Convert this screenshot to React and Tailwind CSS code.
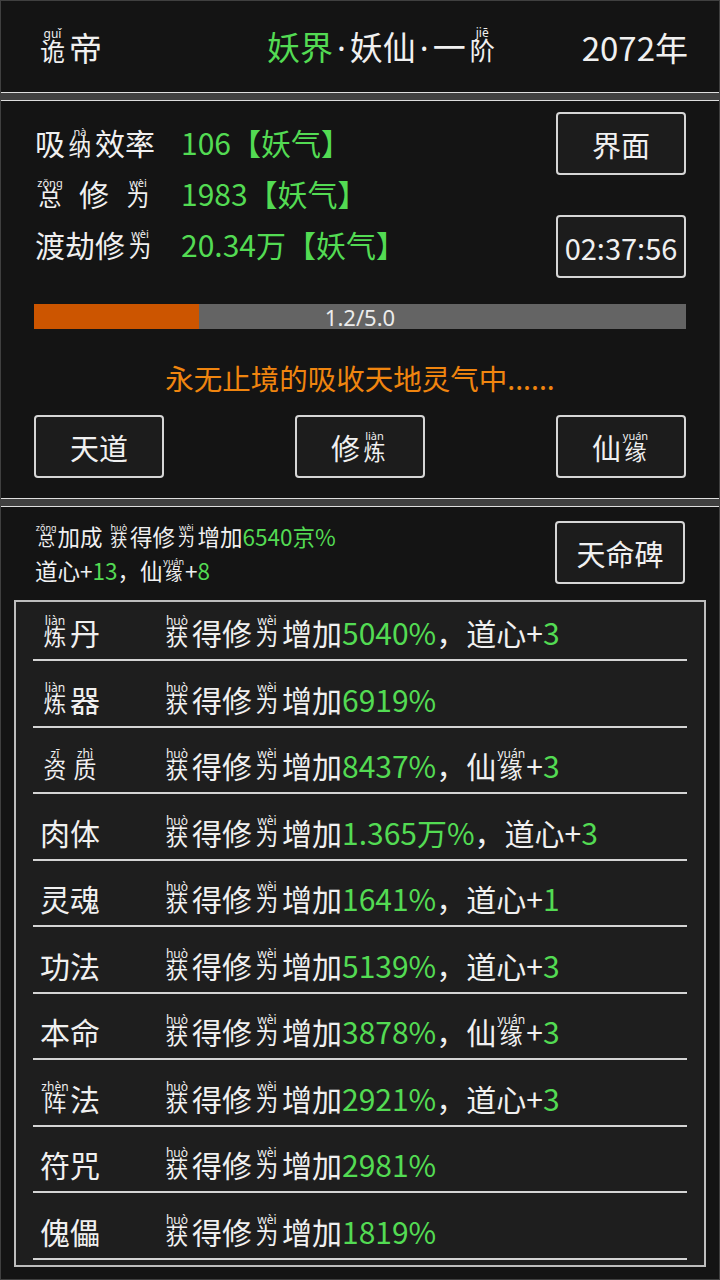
import React from "react";

const G = "text-[#53db53]";

function R({ c, p, pc = "text-[11px]" }) {
  return (
    <span className="inline-block w-[1em] text-center">
      <span className="relative inline-block text-[0.76em] leading-none">
        {c}
        <span
          className={`absolute bottom-full left-1/2 -translate-x-1/2 translate-y-[2px] ${pc} leading-none whitespace-nowrap font-['Noto_Sans',sans-serif]`}
        >
          {p}
        </span>
      </span>
    </span>
  );
}

function Btn({ children }) {
  return (
    <div className="w-[130px] h-[63px] shrink-0 bg-[#1c1c1c] border-2 border-[#d6d6d6] rounded-[4px] flex items-center justify-center text-[29px] leading-[36px]">
      <span>{children}</span>
    </div>
  );
}

const Dot = () => (
  <span className="px-[4px] font-['Noto_Sans',sans-serif]">·</span>
);

const Gain = () => (
  <>
    <R c="获" p="huò" pc="text-[12px]" />得修<R c="为" p="wèi" pc="text-[12px]" />增加
  </>
);

const rows = [
  { label: <><R c="炼" p="liàn" pc="text-[12px]" />丹</>, v: "5040%", extra: "dx", n: "3" },
  { label: <><R c="炼" p="liàn" pc="text-[12px]" />器</>, v: "6919%" },
  { label: <><R c="资" p="zī" pc="text-[12px]" /><R c="质" p="zhì" pc="text-[12px]" /></>, v: "8437%", extra: "xy", n: "3" },
  { label: "肉体", v: "1.365万%", extra: "dx", n: "3" },
  { label: "灵魂", v: "1641%", extra: "dx", n: "1" },
  { label: "功法", v: "5139%", extra: "dx", n: "3" },
  { label: "本命", v: "3878%", extra: "xy", n: "3" },
  { label: <><R c="阵" p="zhèn" pc="text-[12px]" />法</>, v: "2921%", extra: "dx", n: "3" },
  { label: "符咒", v: "2981%" },
  { label: "傀儡", v: "1819%" },
];

export default function App() {
  return (
    <div className="w-[720px] h-[1280px] bg-[#404040] p-px flex flex-col gap-[7px] text-[#f0f0f0] overflow-hidden font-['Noto_Sans_CJK_SC','Noto_Sans',sans-serif]">
      {/* Header */}
      <header className="h-[92px] shrink-0 bg-[#141414] border-b border-[#dedede] flex items-center text-[33px] leading-[42px]">
        <div className="w-[266px] pl-[35px] shrink-0">
          <R c="诡" p="guǐ" pc="text-[12px]" />帝
        </div>
        <div className="whitespace-nowrap">
          <span className={G}>妖界</span>
          <Dot />妖仙<Dot />一<R c="阶" p="jiē" pc="text-[12px]" />
        </div>
        <div className="ml-auto pr-[31px]">2072年</div>
      </header>

      {/* Panel 2 */}
      <section className="h-[399px] shrink-0 bg-[#141414] border-y border-[#dedede] px-[33px] pt-[11px]">
        <div className="flex">
          <div className="mt-[5px] flex-1 text-[30px] leading-[51px]">
            <div className="flex">
              <div className="w-[147px] pl-px">
                吸<R c="纳" p="nà" />效率
              </div>
              <div className={G}>106【妖气】</div>
            </div>
            <div className="flex">
              <div className="w-[147px] pl-px">
                <div className="w-[118px] flex justify-between">
                  <R c="总" p="zǒng" />
                  <span>修</span>
                  <R c="为" p="wèi" />
                </div>
              </div>
              <div className={G}>1983【妖气】</div>
            </div>
            <div className="flex">
              <div className="w-[147px] pl-px">
                渡劫修<R c="为" p="wèi" />
              </div>
              <div className={G}>20.34万【妖气】</div>
            </div>
          </div>
          <div className="flex flex-col gap-[40px]">
            <Btn>界面</Btn>
            <Btn>02:37:56</Btn>
          </div>
        </div>

        <div className="mt-[26px] h-[25px] bg-[#646464] relative flex items-center justify-center">
          <div className="absolute left-0 top-0 h-full w-[165px] bg-[#cc5500]" />
          <span className="relative text-[22px] leading-none text-[#ececec] font-['Noto_Sans',sans-serif]">
            1.2/5.0
          </span>
        </div>

        <div className="mt-[24px] h-[50px] text-center text-[28.5px] leading-[50px] text-[#f0850f] whitespace-nowrap">
          永无止境的吸收天地灵气中......
        </div>

        <div className="mt-[12px] flex justify-between">
          <Btn>天道</Btn>
          <Btn>
            修<R c="炼" p="liàn" />
          </Btn>
          <Btn>
            仙<R c="缘" p="yuán" />
          </Btn>
        </div>
      </section>

      {/* Panel 3 */}
      <section className="flex-1 bg-[#141414] border-t border-[#dedede] px-[13px] pt-[14px] flex flex-col">
        <div className="flex px-[21px]">
          <div className="flex-1 h-[63px] flex flex-col justify-center text-[22.5px] leading-[34px] whitespace-nowrap">
            <div>
              <R c="总" p="zǒng" pc="text-[9px]" />加成 <R c="获" p="huò" pc="text-[9px]" />得修
              <R c="为" p="wèi" pc="text-[9px]" />增加<span className={G}>6540京%</span>
            </div>
            <div>
              道心+<span className={G}>13</span>，仙<R c="缘" p="yuán" pc="text-[9px]" />+<span className={G}>8</span>
            </div>
          </div>
          <Btn>天命碑</Btn>
        </div>

        <div className="mt-[16px] border-2 border-[#bdbdbd] bg-[#1e1e1e] px-[17px] pb-[5px]">
          {rows.map((r, i) => (
            <div
              key={i}
              className={`${i === 0 ? "h-[59px]" : "h-[66.5px]"} border-b-2 border-[#d4d4d4] flex items-end pb-[9px] text-[30px] leading-[36px]`}
            >
              <div className="w-[129px] pl-[7px] shrink-0">{r.label}</div>
              <div className="whitespace-nowrap">
                <Gain />
                <span className={G}>{r.v}</span>
                {r.extra === "dx" && (
                  <>
                    ，道心+<span className={G}>{r.n}</span>
                  </>
                )}
                {r.extra === "xy" && (
                  <>
                    ，仙<R c="缘" p="yuán" pc="text-[12px]" />+<span className={G}>{r.n}</span>
                  </>
                )}
              </div>
            </div>
          ))}
        </div>
      </section>
    </div>
  );
}
